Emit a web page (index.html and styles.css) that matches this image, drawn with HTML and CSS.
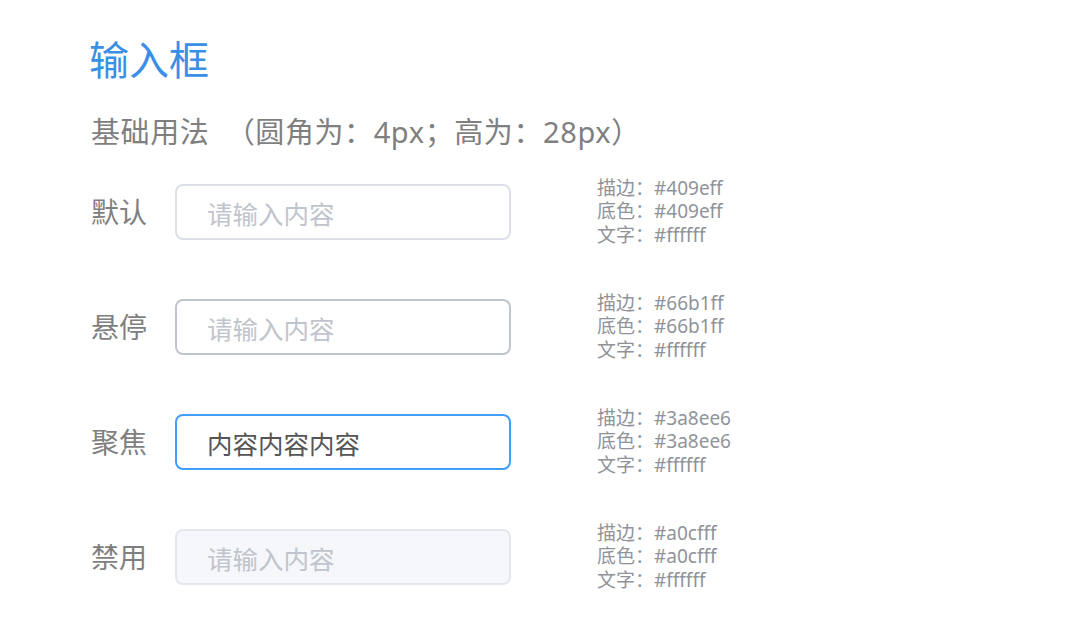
FILE: index.html
```html
<!DOCTYPE html>
<html lang="zh-CN">
<head>
<meta charset="utf-8">
<title>输入框</title>
<link rel="stylesheet" href="styles.css">
</head>
<body>
<main class="page">
  <h1 class="title">输入框</h1>
  <h2 class="subtitle">基础用法&nbsp;&nbsp;（圆角为：4px；高为：28px）</h2>
  <div class="rows">
    <div class="row">
      <span class="label">默认</span>
      <input class="input" type="text" placeholder="请输入内容">
      <div class="notes">
        <div>描边：#409eff</div>
        <div>底色：#409eff</div>
        <div>文字：#ffffff</div>
      </div>
    </div>
    <div class="row">
      <span class="label">悬停</span>
      <input class="input is-hover" type="text" placeholder="请输入内容">
      <div class="notes">
        <div>描边：#66b1ff</div>
        <div>底色：#66b1ff</div>
        <div>文字：#ffffff</div>
      </div>
    </div>
    <div class="row">
      <span class="label">聚焦</span>
      <input class="input is-focus" type="text" value="内容内容内容">
      <div class="notes">
        <div>描边：#3a8ee6</div>
        <div>底色：#3a8ee6</div>
        <div>文字：#ffffff</div>
      </div>
    </div>
    <div class="row">
      <span class="label">禁用</span>
      <input class="input is-disabled" type="text" placeholder="请输入内容" disabled>
      <div class="notes">
        <div>描边：#a0cfff</div>
        <div>底色：#a0cfff</div>
        <div>文字：#ffffff</div>
      </div>
    </div>
  </div>
</main>
</body>
</html>
```
FILE: styles.css
```css
html, body {
  margin: 0;
  padding: 0;
  background: #ffffff;
}

body {
  font-family: "Noto Sans", "Noto Sans CJK SC", sans-serif;
}

.page {
  padding: 34px 0 0 91px;
}

.title {
  margin: 0 0 0 -2px;
  font-family: "Noto Sans CJK SC", sans-serif;
  font-size: 40px;
  line-height: 48px;
  font-weight: 400;
  color: #3a8ee6;
}

.subtitle {
  margin: 30px 0 0;
  font-size: 29px;
  line-height: 40px;
  font-weight: 400;
  letter-spacing: 0.6px;
  color: #7f7f7f;
}

.rows {
  margin-top: 25px;
  display: flex;
  flex-direction: column;
  gap: 45px;
}

.row {
  display: flex;
  align-items: center;
  height: 70px;
}

.label {
  width: 84px;
  font-size: 28px;
  line-height: 40px;
  color: #7f7f7f;
}

.input {
  box-sizing: border-box;
  width: 336px;
  height: 56px;
  padding: 0 30px;
  border: 2px solid #dcdfe6;
  border-radius: 8px;
  background: #ffffff;
  font-family: "Noto Sans CJK SC", sans-serif;
  font-size: 25.5px;
  color: #606266;
  outline: none;
}

.input::placeholder {
  color: #c0c4cc;
}

.input.is-hover {
  border-color: #c0c4cc;
}

.input.is-focus {
  border-color: #409eff;
  color: #555555;
}

.input.is-disabled {
  background: #f5f7fa;
  border-color: #e4e7ed;
}

.input.is-disabled::placeholder {
  color: #c0c4cc;
}

.notes {
  margin-left: 86px;
  font-size: 19px;
  line-height: 23.5px;
  color: #909399;
}
```
